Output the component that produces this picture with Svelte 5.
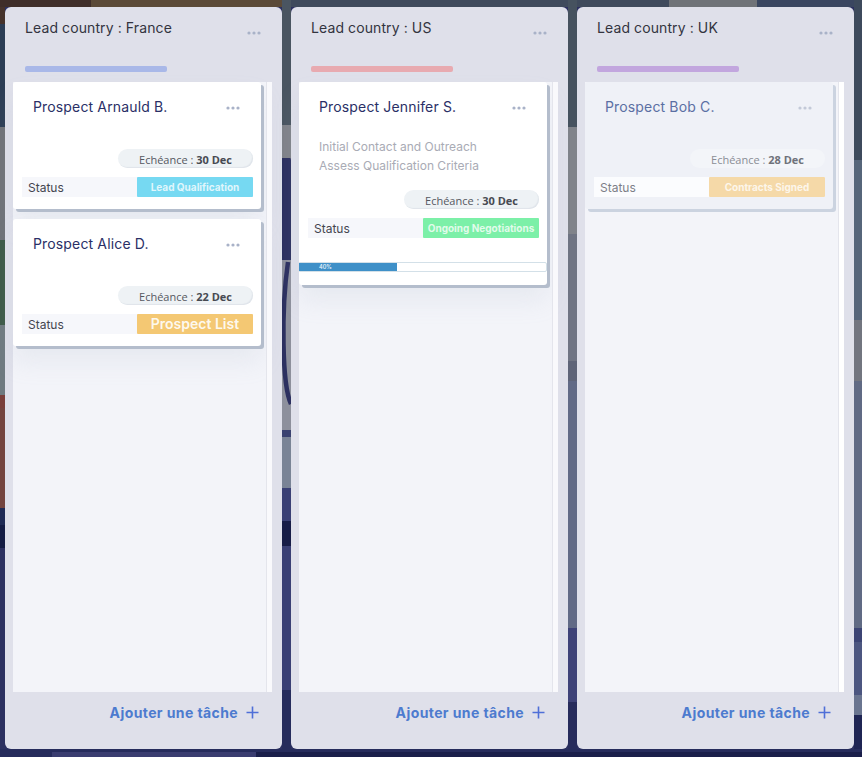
<script lang="ts">
  type Card = {
    name: string;
    due: string;
    status: string;
    color: string;
    large?: boolean;
    notes?: string[];
    progress?: number;
    dimmed?: boolean;
  };

  const columns: { title: string; bar: string; cards: Card[] }[] = [
    {
      title: 'Lead country : France',
      bar: '#a9b8e8',
      cards: [
        { name: 'Prospect Arnauld B.', due: '30 Dec', status: 'Lead Qualification', color: '#76d9f2' },
        { name: 'Prospect Alice D.', due: '22 Dec', status: 'Prospect List', color: '#f4c873', large: true }
      ]
    },
    {
      title: 'Lead country : US',
      bar: '#e8aab0',
      cards: [
        {
          name: 'Prospect Jennifer S.',
          due: '30 Dec',
          status: 'Ongoing Negotiations',
          color: '#7cf0a8',
          notes: ['Initial Contact and Outreach', 'Assess Qualification Criteria'],
          progress: 40
        }
      ]
    },
    {
      title: 'Lead country : UK',
      bar: '#c2a6de',
      cards: [
        { name: 'Prospect Bob C.', due: '28 Dec', status: 'Contracts Signed', color: '#f5d9a8', dimmed: true }
      ]
    }
  ];

  // rough stand-in for the blurred wallpaper behind the board: x, y, w, h, fill
  const backdrop: [number, number, number, number, string][] = [
    [0, 0, 5, 24, '#46332c'], [0, 24, 5, 103, '#2c3d55'], [0, 127, 5, 113, '#6f7278'],
    [0, 240, 5, 85, '#3d5a48'], [0, 325, 5, 70, '#6f7a80'], [0, 395, 5, 13, '#7a3f3b'],
    [0, 408, 5, 100, '#74443f'], [0, 508, 5, 17, '#1f2a55'], [0, 525, 5, 23, '#141c44'],
    [0, 548, 5, 209, '#2c3060'],
    [0, 0, 91, 7, '#3f2e2a'], [91, 0, 193, 7, '#5b4a38'], [284, 0, 385, 7, '#3f4a5c'],
    [669, 0, 88, 7, '#707378'], [757, 0, 105, 7, '#3a4660'],
    [0, 749, 862, 3, '#262c5c'], [0, 752, 52, 5, '#262c5c'], [52, 752, 204, 5, '#3a3d70'],
    [256, 752, 606, 5, '#1a1f4a'],
    [282, 0, 9, 125, '#4a5561'], [282, 125, 9, 33, '#80838a'], [282, 158, 9, 102, '#2c3060'],
    [282, 260, 9, 170, '#8d909c'], [282, 430, 9, 7, '#3a4270'], [282, 437, 9, 51, '#7a8496'],
    [282, 488, 9, 33, '#3a4075'], [282, 521, 9, 25, '#171d47'], [282, 546, 9, 144, '#3a4075'],
    [282, 690, 9, 59, '#262c5c'],
    [568, 0, 9, 127, '#46525f'], [568, 127, 9, 107, '#80838a'], [568, 234, 9, 127, '#6f7483'],
    [568, 361, 9, 20, '#5e6478'], [568, 381, 9, 247, '#616a86'], [568, 628, 9, 74, '#3e4278'],
    [568, 702, 9, 47, '#272c5c'],
    [854, 0, 8, 160, '#3d4a5c'], [854, 160, 8, 160, '#56657a'], [854, 320, 8, 61, '#72757f'],
    [854, 381, 8, 247, '#606a84'], [854, 628, 8, 14, '#3c4474'], [854, 642, 8, 53, '#4c5680'],
    [854, 695, 8, 20, '#6a7590'], [854, 715, 8, 34, '#1f2554']
  ];
</script>

{#snippet dots()}
  <svg class="dots" width="14" height="4" viewBox="0 0 14 4" aria-hidden="true">
    <circle cx="2" cy="2" r="1.6" />
    <circle cx="7" cy="2" r="1.6" />
    <circle cx="12" cy="2" r="1.6" />
  </svg>
{/snippet}

<svg class="backdrop" width="862" height="757" aria-hidden="true">
  <rect width="862" height="757" fill="#2c3060" />
  {#each backdrop as [x, y, w, h, fill]}
    <rect {x} {y} width={w} height={h} {fill} />
  {/each}
  <path d="M282 130 L291 160 L291 130 Z" fill="#80838a" />
  <path d="M288 262 C281 310 282 385 291 404" fill="none" stroke="#2c3060" stroke-width="4.5" />
</svg>

<main class="board">
  {#each columns as col}
    <section class="column">
      <header class="col-head">
        <div class="col-title">
          <h2>{col.title}</h2>
          {@render dots()}
        </div>
        <div class="col-bar" style:background={col.bar}></div>
      </header>

      <div class="list">
        <div class="cards">
          {#each col.cards as card}
            <article class="card" class:dimmed={card.dimmed}>
              <div class="card-head">
                <h3>{card.name}</h3>
                {@render dots()}
              </div>
              <div class="notes">
                {#each card.notes ?? [] as note}
                  <p>{note}</p>
                {/each}
              </div>
              <div class="due">Echéance : <b>{card.due}</b></div>
              <div class="status-row">
                <span class="status-label">Status</span>
                <span class="badge" class:large={card.large} style:background={card.color}>{card.status}</span>
              </div>
              {#if card.progress}
                <div class="progress">
                  <div class="progress-fill" style:width="{card.progress}%">{card.progress}%</div>
                </div>
              {/if}
            </article>
          {/each}
        </div>
        <div class="scroll-track"></div>
      </div>

      <footer class="col-foot">
        <button class="add">
          Ajouter une tâche
          <svg width="13" height="13" viewBox="0 0 13 13" fill="none">
            <path d="M6.5 0.5v12M0.5 6.5h12" stroke="#4f6fd8" stroke-width="1.6" />
          </svg>
        </button>
      </footer>
    </section>
  {/each}
</main>

<style>
  :global(body) {
    margin: 0;
    background: #2c3060;
    overflow: hidden;
  }

  .backdrop {
    position: absolute;
    top: 0;
    left: 0;
    filter: blur(0.6px);
  }

  .board {
    position: relative;
    display: flex;
    gap: 9px;
    height: 757px;
    box-sizing: border-box;
    padding: 7px 8px 8px 5px;
    font-family: Inter, "Noto Sans", sans-serif;
  }

  .column {
    flex: 1;
    display: flex;
    flex-direction: column;
    min-width: 0;
    background: #dfe0ea;
    border-radius: 6px;
  }

  .col-head {
    height: 75px;
    box-sizing: border-box;
    padding: 12px 20px 0;
  }

  .col-title {
    display: flex;
    justify-content: space-between;
    height: 47px;
  }

  h2 {
    margin: 0;
    font-size: 14px;
    line-height: 18px;
    font-weight: 400;
    letter-spacing: 0.1px;
    color: #33343f;
  }

  .dots {
    flex: none;
    fill: #a9b2c8;
  }

  .col-title .dots {
    margin: 12px 1px 0 0;
  }

  .col-bar {
    width: 142px;
    height: 6px;
    border-radius: 2px;
  }

  .list {
    flex: 1;
    display: flex;
    margin-left: 8px;
    margin-right: 10px;
    background: #f3f4f9;
    min-height: 0;
  }

  .cards {
    flex: 1;
    display: flex;
    flex-direction: column;
    gap: 10px;
    min-width: 0;
  }

  .scroll-track {
    width: 6px;
    background: #f9f9fc;
    border-left: 1px solid #e4e5ec;
    box-sizing: border-box;
  }

  .column:last-child .scroll-track {
    background: #fff;
  }

  .card {
    width: 248px;
    box-sizing: border-box;
    padding: 16px 8px 12px 9px;
    background: #fff;
    border-radius: 3px;
    box-shadow: 3px 3px 0 #b4bdcc, 0 16px 24px rgba(170, 178, 200, 0.16);
  }

  .card-head {
    display: flex;
    justify-content: space-between;
    height: 24px;
    padding: 0 13px 0 11px;
  }

  h3 {
    margin: 0;
    font-size: 14px;
    line-height: 18px;
    font-weight: 400;
    letter-spacing: 0.15px;
    color: #2a2f66;
  }

  .card-head .dots {
    margin-top: 8px;
  }

  .notes {
    min-height: 27px;
    padding: 0 11px;
  }

  .notes p {
    margin: 0;
    font-size: 12px;
    line-height: 19px;
    color: #a9abb5;
  }

  .notes:has(p) {
    padding-top: 15px;
    padding-bottom: 15px;
  }

  .due {
    width: 135px;
    height: 19px;
    margin: 0 0 9px auto;
    box-sizing: border-box;
    padding-right: 21px;
    border-radius: 10px;
    background: #eef2f5;
    box-shadow: inset -1px -1px 1px #dfe4ea;
    font-family: "Open Sans", sans-serif;
    font-size: 11px;
    line-height: 21px;
    text-align: right;
    color: #55585f;
  }

  .due b {
    font-weight: 700;
    color: #474a52;
  }

  .status-row {
    display: flex;
    align-items: center;
    justify-content: space-between;
    height: 20px;
    background: #f6f7fb;
  }

  .status-label {
    padding-left: 6px;
    font-size: 12px;
    color: #44464f;
  }

  .badge {
    width: 116px;
    height: 20px;
    border-radius: 1px;
    font-size: 10px;
    font-weight: 700;
    line-height: 21px;
    text-align: center;
    white-space: nowrap;
    color: rgba(255, 255, 255, 0.78);
  }

  .badge.large {
    font-size: 14px;
    font-weight: 600;
    line-height: 20px;
    color: rgba(255, 255, 255, 0.9);
  }

  .progress {
    height: 8px;
    margin: 24px -8px 1px -9px;
    border: 1px solid #d3e0e8;
    border-radius: 0 2px 2px 0;
    background: #fff;
  }

  .progress-fill {
    height: 8px;
    margin: 0 0 0 -1px;
    padding-left: 20px;
    box-sizing: border-box;
    background: #3f90c8;
    font-size: 5.5px;
    font-weight: 600;
    line-height: 8px;
    color: #e8f3fa;
  }

  .dimmed {
    background: #eff1f7;
    box-shadow: 3px 3px 0 #cbd3e0;
  }

  .dimmed h3 {
    color: #5b6fa3;
  }

  .dimmed .dots {
    fill: #c3c9d8;
  }

  .dimmed .due {
    background: #f3f5f9;
    box-shadow: none;
    color: #8a8d95;
  }

  .dimmed .due b {
    color: #6f727b;
  }

  .dimmed .status-row {
    background: #fbfcfe;
  }

  .dimmed .status-label {
    color: #7d7f88;
  }

  .col-foot {
    height: 57px;
    display: flex;
    justify-content: flex-end;
    padding: 11px 23px 0 0;
    box-sizing: border-box;
  }

  .add {
    display: flex;
    align-items: center;
    gap: 8px;
    height: 18px;
    padding: 0;
    border: 0;
    background: none;
    font-family: inherit;
    font-size: 14px;
    font-weight: 700;
    letter-spacing: 0.4px;
    color: #4d7bcf;
  }
</style>
